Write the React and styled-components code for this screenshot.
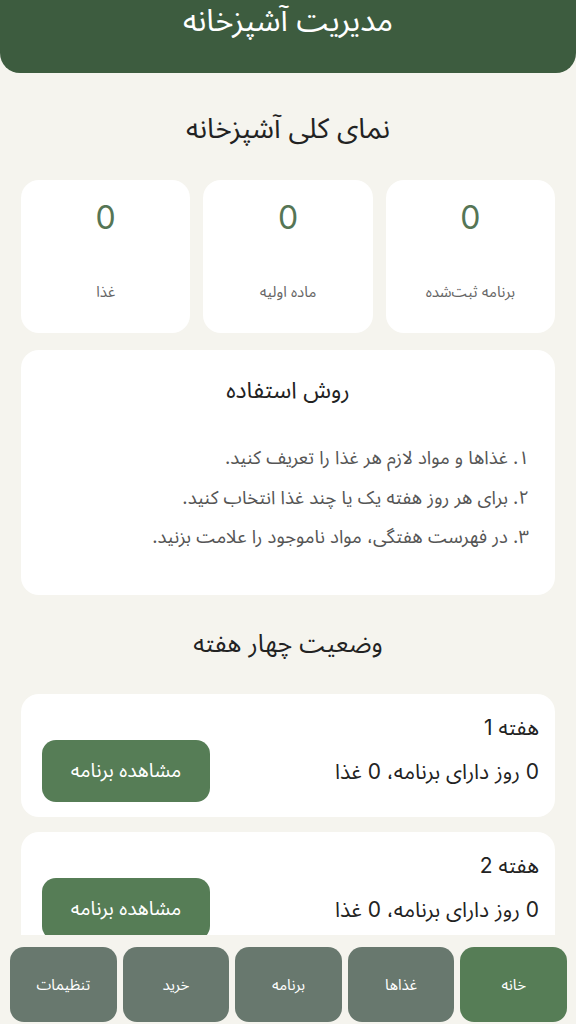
import styled, { createGlobalStyle } from 'styled-components'

const GlobalStyle = createGlobalStyle`
  * { box-sizing: border-box; }
  body {
    margin: 0;
    background: #f5f4ee;
    font-family: Inter, "Noto Sans Arabic", "Noto Sans", "DejaVu Sans", sans-serif;
    direction: rtl;
    color: #222;
  }
`

const Page = styled.div`
  min-height: 100vh;
  padding-bottom: 100px;
`

const Header = styled.header`
  background: #3d5c3f;
  color: #fff;
  border-radius: 0 0 20px 20px;
  height: 73px;
  text-align: center;
`

const HeaderTitle = styled.h1`
  margin: 0;
  font-size: 31px;
  font-weight: 400;
  line-height: 40px;
`

const Main = styled.main`
  padding: 0 21px;
`

const SectionTitle = styled.h2`
  margin: 0;
  text-align: center;
  font-weight: 400;
  font-size: ${(p) => p.size}px;
  line-height: ${(p) => p.lh}px;
  padding: ${(p) => p.pad};
`

const StatGrid = styled.div`
  display: grid;
  grid-template-columns: repeat(3, 1fr);
  gap: 13px;
`

const StatCard = styled.div`
  background: #fff;
  border-radius: 18px;
  height: 153px;
  display: flex;
  flex-direction: column;
  align-items: center;
  padding-top: 18px;
`

const StatValue = styled.div`
  font-size: 32px;
  color: #557555;
  line-height: 40px;
`

const StatLabel = styled.div`
  margin-top: 44px;
  font-size: 15px;
  line-height: 20px;
  color: #666;
`

const Card = styled.section`
  background: #fff;
  border-radius: 18px;
  margin-top: 17px;
  padding: 24px 26px 38px;
`

const CardTitle = styled.h3`
  margin: 0 0 32px;
  font-size: 23px;
  font-weight: 400;
  line-height: 32px;
  text-align: center;
  color: #222;
`

const Steps = styled.ol`
  list-style: none;
  margin: 0;
  padding: 0;
`

const Step = styled.li`
  font-size: 18.5px;
  color: #555;
  line-height: 39.5px;
`

const WeekList = styled.div`
  display: flex;
  flex-direction: column;
  gap: 15px;
`

const WeekCard = styled.div`
  background: #fff;
  border-radius: 18px;
  height: 123px;
  padding: 20px 16px 0 21px;
  display: flex;
  justify-content: space-between;
  align-items: flex-start;
`

const WeekInfo = styled.div`
  display: flex;
  flex-direction: column;
  gap: 16px;
`

const WeekText = styled.div`
  font-size: 21px;
  line-height: 28px;
  color: #222;
`

const ViewButton = styled.button`
  margin-top: 26px;
  width: 168px;
  height: 62px;
  border: none;
  border-radius: 14px;
  background: #567d56;
  color: #fff;
  font-family: inherit;
  font-size: 19.5px;
`

const BottomNav = styled.nav`
  position: fixed;
  left: 0;
  right: 0;
  bottom: 0;
  background: #f5f4ee;
  padding: 12px 9px 2px 10px;
  display: grid;
  grid-template-columns: repeat(5, 1fr);
  gap: 6px;
`

const NavButton = styled.button`
  height: 75px;
  border: none;
  border-radius: 14px;
  background: ${(p) => (p.active ? '#567d56' : '#68786e')};
  color: #fff;
  font-family: inherit;
  font-size: 15px;
`

const stats = [
  { value: 0, label: 'برنامه ثبت‌شده' },
  { value: 0, label: 'ماده اولیه' },
  { value: 0, label: 'غذا' },
]

const steps = [
  '۱. غذاها و مواد لازم هر غذا را تعریف کنید.',
  '۲. برای هر روز هفته یک یا چند غذا انتخاب کنید.',
  '۳. در فهرست هفتگی، مواد ناموجود را علامت بزنید.',
]

const weeks = [1, 2, 3, 4]

const tabs = ['خانه', 'غذاها', 'برنامه', 'خرید', 'تنظیمات']

export default function App() {
  return (
    <Page>
      <GlobalStyle />
      <Header>
        <HeaderTitle>مدیریت آشپزخانه</HeaderTitle>
      </Header>
      <Main>
        <SectionTitle size={28} lh={40} pad="35px 0 32px">
          نمای کلی آشپزخانه
        </SectionTitle>
        <StatGrid>
          {stats.map((s) => (
            <StatCard key={s.label}>
              <StatValue>{s.value}</StatValue>
              <StatLabel>{s.label}</StatLabel>
            </StatCard>
          ))}
        </StatGrid>
        <Card>
          <CardTitle>روش استفاده</CardTitle>
          <Steps>
            {steps.map((t) => (
              <Step key={t}>{t}</Step>
            ))}
          </Steps>
        </Card>
        <SectionTitle size={25} lh={36} pad="30px 0 33px">
          وضعیت چهار هفته
        </SectionTitle>
        <WeekList>
          {weeks.map((w) => (
            <WeekCard key={w}>
              <WeekInfo>
                <WeekText>هفته {w}</WeekText>
                <WeekText>0 روز دارای برنامه، 0 غذا</WeekText>
              </WeekInfo>
              <ViewButton>مشاهده برنامه</ViewButton>
            </WeekCard>
          ))}
        </WeekList>
      </Main>
      <BottomNav>
        {tabs.map((t, i) => (
          <NavButton key={t} active={i === 0}>
            {t}
          </NavButton>
        ))}
      </BottomNav>
    </Page>
  )
}
